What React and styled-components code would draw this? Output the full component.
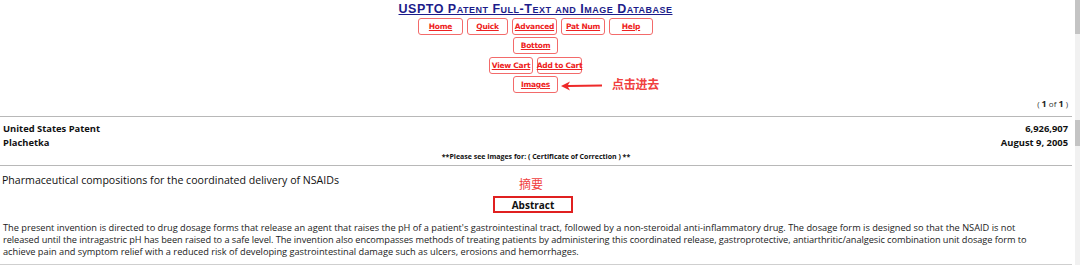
import React from 'react';
import styled, { createGlobalStyle } from 'styled-components';

const GlobalStyle = createGlobalStyle`
  html, body {
    margin: 0;
    padding: 0;
    background: #fff;
  }
  body {
    font-family: "Open Sans", "Noto Sans CJK SC", sans-serif;
    color: #111;
    overflow: hidden;
  }
`;

const Frame = styled.div`
  display: flex;
  width: 1080px;
  height: 265px;
  overflow: hidden;
`;

const Page = styled.div`
  flex: 1;
  min-width: 0;
  position: relative;
  padding: 0 3px 0 0;
`;

const Scrollbar = styled.div`
  width: 5px;
  flex-shrink: 0;
  background: #f1f1f1;
  display: flex;
  flex-direction: column;
`;

const Thumb = styled.div`
  height: ${p => p.h}px;
  margin-top: ${p => p.top}px;
  background: #c4c4c4;
`;

const Header = styled.div`
  display: flex;
  flex-direction: column;
  align-items: center;
  padding-top: 2px;
  padding-right: 1px;
`;

const Title = styled.a`
  font-family: "Liberation Sans", sans-serif;
  font-weight: bold;
  font-size: 12.5px;
  font-variant: small-caps;
  letter-spacing: 0.5px;
  color: #1c1c8a;
  text-decoration: underline;
  line-height: 15px;
`;

const ButtonRow = styled.div`
  display: flex;
  justify-content: center;
  gap: 4px;
  margin-top: ${p => p.mt || 2}px;
`;

const NavButton = styled.a`
  position: relative;
  display: flex;
  align-items: center;
  justify-content: center;
  width: ${p => p.w || 44}px;
  height: 17px;
  box-sizing: border-box;
  border: 1px solid #f36a6a;
  border-radius: 3px;
  font-family: "DejaVu Sans", sans-serif;
  font-weight: bold;
  font-size: 7.5px;
  letter-spacing: -0.25px;
  white-space: nowrap;
  color: #ee2222;
  text-decoration: underline;
`;

const Arrow = styled.svg`
  position: absolute;
  left: 46px;
  top: 3px;
`;

const Note = styled.span`
  position: absolute;
  font-family: "Noto Sans CJK SC", sans-serif;
  font-size: 12px;
  color: #f04040;
  white-space: nowrap;
  left: ${p => p.x}px;
  top: ${p => p.y}px;
`;

const Pager = styled.div`
  text-align: right;
  font-size: 8px;
  color: #333;
  margin-top: 5px;
  padding-right: 4px;
  line-height: 12px;
  b { font-weight: bold; font-size: 9px; color: #222; }
`;

const Rule = styled.div`
  border-top: 1px solid ${p => p.c || '#b8b8b8'};
  margin-top: ${p => p.mt || 0}px;
`;

const MetaRow = styled.div`
  display: flex;
  justify-content: space-between;
  font-weight: bold;
  font-size: 9.4px;
  line-height: 14px;
  padding: 0 4px 0 3px;
  margin-top: ${p => p.mt || 0}px;
`;

const Notice = styled.div`
  text-align: center;
  font-weight: bold;
  font-size: 7px;
  line-height: 12px;
  margin-top: 1px;
`;

const InventionTitle = styled.div`
  font-size: 10.6px;
  line-height: 14px;
  padding-left: 2px;
  margin-top: 7px;
`;

const AbstractWrap = styled.div`
  display: flex;
  justify-content: center;
  margin-top: 9px;
`;

const AbstractBox = styled.div`
  width: 80px;
  height: 17px;
  box-sizing: border-box;
  border: 2px solid #e02020;
  display: flex;
  align-items: center;
  justify-content: center;
  font-weight: bold;
  font-size: 10px;
  margin-left: -6px;
`;

const Paragraph = styled.div`
  margin-top: 9px;
  padding-left: 3px;
  font-size: 9.22px;
  color: #222;
`;

const Line = styled.div`
  height: 12px;
  line-height: 12px;
  white-space: nowrap;
  letter-spacing: ${p => p.ls || 0}px;
`;

const navTop = [
  { label: 'Home', w: 45 },
  { label: 'Quick', w: 41 },
  { label: 'Advanced', w: 45 },
  { label: 'Pat Num', w: 44 },
  { label: 'Help', w: 44 },
];

const abstractLines = [
  { text: "The present invention is directed to drug dosage forms that release an agent that raises the pH of a patient's gastrointestinal tract, followed by a non-steroidal anti-inflammatory drug. The dosage form is designed so that the NSAID is not", ls: 0 },
  { text: 'released until the intragastric pH has been raised to a safe level. The invention also encompasses methods of treating patients by administering this coordinated release, gastroprotective, antiarthritic/analgesic combination unit dosage form to', ls: -0.06 },
  { text: 'achieve pain and symptom relief with a reduced risk of developing gastrointestinal damage such as ulcers, erosions and hemorrhages.', ls: 0 },
];

export default function App() {
  return (
    <Frame>
      <GlobalStyle />
      <Page>
        <Header>
          <Title>USPTO Patent Full-Text and Image Database</Title>
          <ButtonRow mt={1}>
            {navTop.map(b => (
              <NavButton key={b.label} w={b.w}>{b.label}</NavButton>
            ))}
          </ButtonRow>
          <ButtonRow>
            <NavButton w={45}>Bottom</NavButton>
          </ButtonRow>
          <ButtonRow mt={3}>
            <NavButton w={44}>View Cart</NavButton>
            <NavButton w={45}>Add to Cart</NavButton>
          </ButtonRow>
          <ButtonRow mt={2}>
            <NavButton w={45}>
              Images
              <Arrow width="44" height="12" viewBox="0 0 44 12">
                <path d="M1 6 L10 1.5 L8 5 L42 4.6 L42 6.6 L8 7 L10 10.5 Z" fill="#ee2a2a" />
              </Arrow>
              <Note x={98} y={-2}>点击进去</Note>
            </NavButton>
          </ButtonRow>
        </Header>
        <Pager>( <b>1</b> of <b>1</b> )</Pager>
        <Rule mt={6} />
        <MetaRow mt={5}>
          <span>United States Patent</span>
          <span>6,926,907</span>
        </MetaRow>
        <MetaRow>
          <span>Plachetka</span>
          <span>August 9, 2005</span>
        </MetaRow>
        <Notice>**Please see images for: ( Certificate of Correction ) **</Notice>
        <Rule mt={2} />
        <InventionTitle>Pharmaceutical compositions for the coordinated delivery of NSAIDs</InventionTitle>
        <Note x={519} y={175}>摘要</Note>
        <AbstractWrap>
          <AbstractBox>Abstract</AbstractBox>
        </AbstractWrap>
        <Paragraph>
          {abstractLines.map((line, i) => (
            <Line key={i} ls={line.ls}>{line.text}</Line>
          ))}
        </Paragraph>
        <Rule mt={6} c="#cfcfcf" />
      </Page>
      <Scrollbar>
        <Thumb top={0} h={34} />
        <Thumb top={86} h={26} />
      </Scrollbar>
    </Frame>
  );
}
